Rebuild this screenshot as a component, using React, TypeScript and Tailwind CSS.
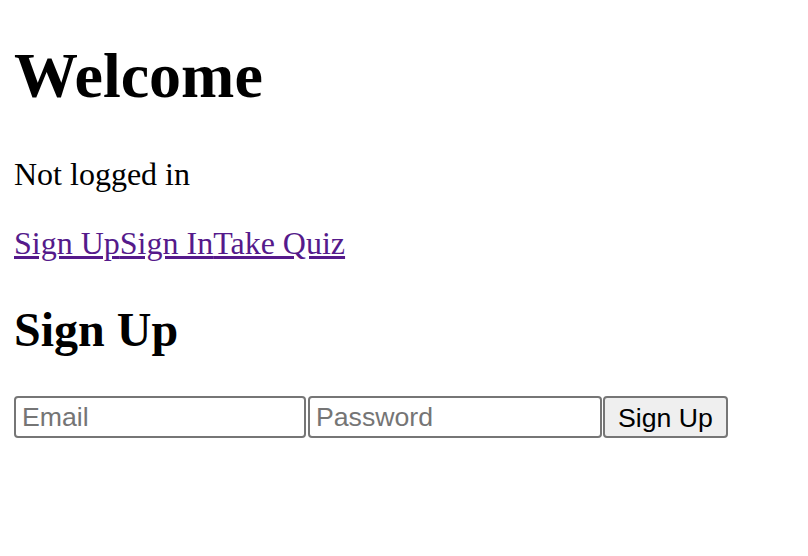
import React from 'react'

const App = () => {
  return (
    <div className="min-h-screen bg-white px-[14px] pt-[40px] text-black" style={{ fontFamily: '"Liberation Serif", "Times New Roman", serif' }}>
      <h1 className="text-[64px] leading-[71px] font-bold">Welcome</h1>
      <p className="mt-[46px] text-[32px] leading-[35px]">Not logged in</p>
      <p className="mt-[34px] text-[32px] leading-[35px]">
        <a href="#" className="text-[#551a8b] underline">Sign Up</a>
        <a href="#" className="text-[#551a8b] underline">Sign In</a>
        <a href="#" className="text-[#551a8b] underline">Take Quiz</a>
      </p>
      <h2 className="mt-[42px] text-[48px] leading-[53px] font-bold">Sign Up</h2>
      <form className="mt-[40px] flex items-center font-['Liberation_Sans',Arial,sans-serif] text-[26.67px]" onSubmit={(e) => e.preventDefault()}>
        <input
          type="email"
          placeholder="Email"
          className="h-[42px] w-[292px] rounded-[4px] border-2 border-[#767676] bg-white px-[6px] text-black placeholder:text-[#757575] outline-none"
        />
        <input
          type="password"
          placeholder="Password"
          className="ml-[2px] h-[42px] w-[294px] rounded-[4px] border-2 border-[#767676] bg-white px-[6px] text-black placeholder:text-[#757575] outline-none"
        />
        <button
          type="submit"
          className="ml-[1px] h-[42px] w-[125px] rounded-[4px] border-2 border-[#767676] bg-[#efefef] pb-[2px] text-black"
        >
          Sign Up
        </button>
      </form>
    </div>
  )
}

export default App
